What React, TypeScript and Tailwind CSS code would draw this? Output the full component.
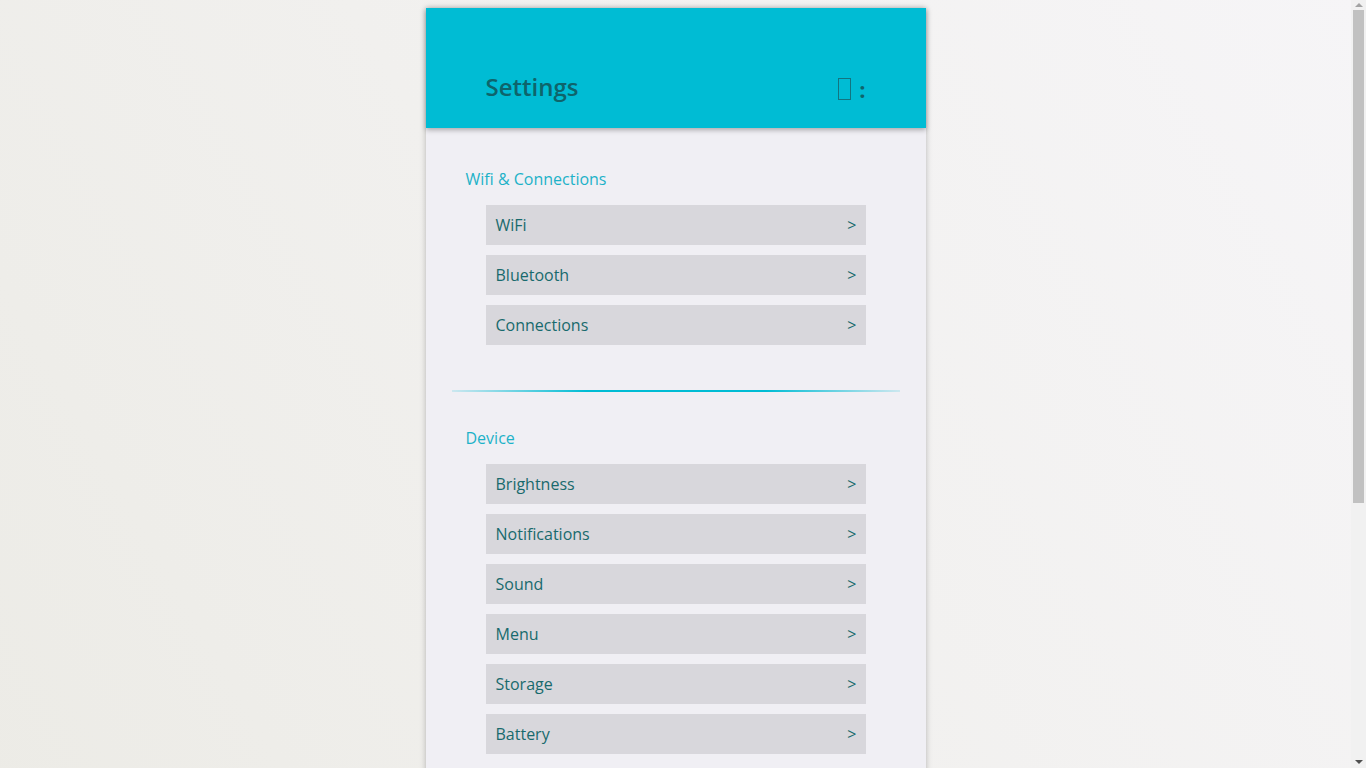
import React from 'react';

const sections = [
    { title: 'Wifi & Connections', items: ['WiFi', 'Bluetooth', 'Connections'] },
    { title: 'Device', items: ['Brightness', 'Notifications', 'Sound', 'Menu', 'Storage', 'Battery'] },
    { title: 'Personal', items: ['Accounts', 'Privacy', 'Location', 'Security', 'Language'] },
];

const Row: React.FC<{ label: string }> = ({ label }) => (
    <div className="flex h-10 items-center justify-between bg-[#d8d7dc] pl-[10px] pr-[9px] text-[16px] text-[#186a6d]">
        <span>{label}</span>
        <span>&gt;</span>
    </div>
);

// the window's scroll bar, as the reference shows it
const ScrollBar: React.FC = () => (
    <div className="fixed top-0 right-0 flex h-screen w-[15px] flex-col items-center bg-[#f1f1f1]">
        <div className="flex h-[10px] w-full items-center justify-center">
            <div className="h-0 w-0 border-x-[4px] border-b-[4px] border-x-transparent border-b-[#a3a3a3]" />
        </div>
        <div className="h-[493px] w-[11px] bg-[#c1c1c1]" />
        <div className="flex-1" />
        <div className="flex h-[12px] w-full items-center justify-center">
            <div className="h-0 w-0 border-x-[4px] border-t-[4px] border-x-transparent border-t-[#505050]" />
        </div>
    </div>
);

const App: React.FC = () => {
    return (
        <div
            className="min-h-screen bg-[linear-gradient(60deg,#ebeae4_0%,#f1f0ee_50%,#f6f5f7_100%)] pt-2 pb-[2px]"
            style={{ fontFamily: '"Open Sans", "Noto Sans", sans-serif' }}
        >
            <div className="mr-[15px]">
                <div className="mx-auto w-[500px] bg-[#f0eff4] pb-10 shadow-[0_0_6px_rgba(0,0,0,0.25)]">
                    <header className="relative z-10 flex h-[120px] items-end justify-between bg-[#00bcd4] pb-[25px] pl-[60px] pr-[60px] shadow-[0_2px_5px_rgba(0,0,0,0.3)]">
                        <h1 className="text-[24px] leading-8 font-semibold text-[#0e646b]">Settings</h1>
                        <div className="mb-[3px] flex items-center gap-[8px] text-[#0e646b]">
                            <span className="block h-[22px] w-[13px] border-[1.5px] border-[#137480]" />
                            <span className="text-[22px] leading-[22px] font-bold">:</span>
                        </div>
                    </header>

                    {sections.map((section, i) => (
                        <div key={section.title}>
                            {i > 0 && (
                                <div className="mx-[26px] mt-[45px] h-[2px] bg-[linear-gradient(90deg,rgba(0,188,212,0.15),#00bcd4_30%,#00bcd4_70%,rgba(0,188,212,0.15))]" />
                            )}
                            <section className={i === 0 ? 'pt-[39px]' : 'pt-[34px]'}>
                                <h2 className="mb-[14px] pl-10 text-[16px] leading-6 text-[#1db2c8]">{section.title}</h2>
                                <div className="flex flex-col gap-[10px] px-[60px]">
                                    {section.items.map((item) => (
                                        <Row key={item} label={item} />
                                    ))}
                                </div>
                            </section>
                        </div>
                    ))}
                </div>
            </div>
            <ScrollBar />
        </div>
    );
};

export default App;
